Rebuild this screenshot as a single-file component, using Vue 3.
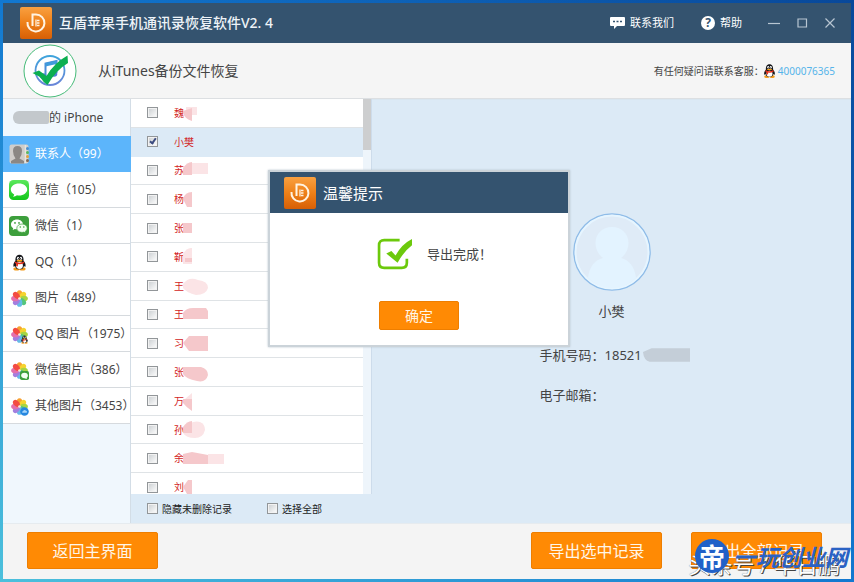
<script setup>
import { ref } from 'vue'

const categories = [
  { icon: 'contacts', label: '联系人（99）', active: true },
  { icon: 'sms', label: '短信（105）' },
  { icon: 'wechat', label: '微信（1）' },
  { icon: 'qq', label: 'QQ（1）' },
  { icon: 'flower', label: '图片（489）' },
  { icon: 'flower', badge: 'qq', label: 'QQ 图片（1975）' },
  { icon: 'flower', badge: 'wechat', label: '微信图片（386）' },
  { icon: 'flower', badge: 'cloud', label: '其他图片（3453）' },
]

const contacts = ref([
  { name: '魏', checked: false, dark: 'M0 12 L9 9 V22 Q2 20 0 14Z', light: 'M3 8 H14 V16 H3Z' },
  { name: '小樊', checked: true },
  { name: '苏', checked: false, dark: 'M0 12 Q4 6 9 6 V19 H0Z', light: 'M9 7 H25 V18 H9Z' },
  { name: '杨', checked: false, dark: 'M0 14 Q2 7 9 7 V22 H4Z', light: '' },
  { name: '张', checked: false, dark: 'M0 9 H9 V19 H0Z', light: '' },
  { name: '靳', checked: false, dark: 'M2 15 H9 V19 H2Z', light: 'M0 11 Q4 4 9 5 V21 H0Z' },
  { name: '王', checked: false, dark: '', light: 'M0 12 Q6 4 15 8 Q25 9 25 16 Q23 23 13 23 Q4 21 0 16Z' },
  { name: '王', checked: false, dark: 'M0 13 Q3 8 10 8 H23 L25 11 V19 H0Z', light: '' },
  { name: '习', checked: false, dark: 'M0 14 L6 7 H25 V22 H6Z', light: '' },
  { name: '张', checked: false, dark: 'M0 9 H18 Q25 11 25 17 Q23 25 14 23 Q3 21 0 16Z', light: '' },
  { name: '万', checked: false, dark: 'M0 12 L9 12 V24 Q3 20 0 16Z', light: 'M2 12 L9 6 V12Z' },
  { name: '孙', checked: false, dark: 'M0 11 Q4 5 9 5 V17 H0Z', light: 'M0 16 V12 Q9 4 17 6 Q22 8 22 14 Q20 22 12 22 Q3 22 0 17Z' },
  { name: '余', checked: false, dark: 'M0 10 L9 8 L25 11 V20 H0Z', light: 'M25 10 H41 V20 H25Z' },
  { name: '刘', checked: false, dark: 'M0 14 L5 7 H9 V21 H4Z', light: '' },
])

const hideKept = ref(false)
const selectAll = ref(false)
const dialogOpen = ref(true)
</script>

<template>
  <div class="desktop">
    <svg class="defs" aria-hidden="true">
      <defs>
        <linearGradient id="gOrange" x1="0" y1="0" x2="0" y2="1">
          <stop offset="0" stop-color="#f9a040" /><stop offset="0.5" stop-color="#ee8018" /><stop offset="1" stop-color="#d75f06" />
        </linearGradient>
        <linearGradient id="gSms" x1="0" y1="0" x2="0" y2="1">
          <stop offset="0" stop-color="#5be85c" /><stop offset="1" stop-color="#13c71a" />
        </linearGradient>
        <linearGradient id="gNote" x1="0" y1="0" x2="0" y2="1">
          <stop offset="0" stop-color="#3fa4dc" /><stop offset="1" stop-color="#6a86d8" />
        </linearGradient>
      </defs>
      <symbol id="logo" viewBox="0 0 32 32">
        <rect width="32" height="32" rx="2" fill="url(#gOrange)" />
        <path d="M7.500 15 A8.500 8.500 0 1 0 16 7.500 H12.500 V19" fill="none" stroke="#fff3e2" stroke-width="2" />
        <path d="M16 12.500 V19.500 M17 13.500 H19.500 M17 16 H19.500 M17 18.500 H19.500" fill="none" stroke="#fff3e2" stroke-width="1.300" />
      </symbol>
      <symbol id="qq" viewBox="0 0 20 20">
        <ellipse cx="6.500" cy="17.500" rx="3.600" ry="1.800" fill="#f39a18" />
        <ellipse cx="13.500" cy="17.500" rx="3.600" ry="1.800" fill="#f39a18" />
        <path d="M10 1 C6.500 1 5 4 5.200 8 C3.500 10 2.300 12.500 3 15 C3.500 15.300 4.200 14.500 4.700 14 C5.500 17 7 18 10 18 C13 18 14.500 17 15.300 14 C15.800 14.500 16.500 15.300 17 15 C17.700 12.500 16.500 10 14.800 8 C15 4 13.500 1 10 1Z" fill="#17181c" />
        <ellipse cx="10" cy="13.500" rx="4" ry="4" fill="#fff" />
        <ellipse cx="8.300" cy="5" rx="1.300" ry="1.800" fill="#fff" />
        <ellipse cx="11.700" cy="5" rx="1.300" ry="1.800" fill="#fff" />
        <circle cx="8.700" cy="5.200" r="0.600" /><circle cx="11.300" cy="5.200" r="0.600" />
        <ellipse cx="10" cy="8" rx="3.500" ry="1.100" fill="#f7a51a" />
        <path d="M4.800 8.700 Q10 12 15.200 8.700 L15.600 10.600 Q10 13.800 4.400 10.600Z" fill="#e8301c" />
        <path d="M6 11 L8.300 11.800 L8 14.800 L6 14Z" fill="#e8301c" />
      </symbol>
      <symbol id="contacts" viewBox="0 0 20 20">
        <rect width="19" height="19" x="0.500" y="0.500" rx="2" fill="#d0cdca" />
        <path d="M2 19.500 V17 L6.500 14.500 Q4 11 4 7 Q4 2 8.500 2 Q13 2 13 7 Q13 11 10.500 14.500 L15 17 V19.500Z" fill="#8b8784" />
        <path d="M16.500 1 V19" stroke="#e9e5dc" stroke-width="1.500" />
        <circle cx="18.500" cy="4.500" r="1.500" fill="#4a8fd0" /><circle cx="18.500" cy="8.500" r="1.500" fill="#58b860" />
        <circle cx="18.500" cy="12.500" r="1.500" fill="#e3a33c" /><circle cx="18.500" cy="16.500" r="1.500" fill="#806a58" />
      </symbol>
      <symbol id="sms" viewBox="0 0 20 20">
        <rect width="20" height="20" rx="4.500" fill="url(#gSms)" />
        <path d="M10 3.500 C5.300 3.500 1.800 6.200 1.800 9.500 C1.800 11.800 3.300 13.400 5.200 14.400 Q5 15.700 3.800 16.800 Q6.500 16.500 8 15.200 Q9 15.500 10 15.500 C14.700 15.500 18.200 12.800 18.200 9.500 C18.200 6.200 14.700 3.500 10 3.500Z" fill="#fff" />
      </symbol>
      <symbol id="wechat" viewBox="0 0 20 20">
        <rect width="20" height="20" rx="4" fill="#3d9f3c" />
        <path d="M8 3.500 C4.500 3.500 2 5.700 2 8.400 C2 10 2.900 11.300 4.200 12.200 L3.700 14 L5.900 12.900 Q7 13.200 8 13.200 C11.400 13.200 14 11 14 8.400 C14 5.700 11.400 3.500 8 3.500Z" fill="#fff" />
        <path d="M13 8 C10 8 7.800 9.900 7.800 12.200 C7.800 14.600 10 16.400 13 16.400 Q14 16.400 14.800 16.100 L16.700 17.100 L16.200 15.500 C17.400 14.700 18.200 13.500 18.200 12.200 C18.200 9.900 16 8 13 8Z" fill="#f4fff2" stroke="#3d9f3c" stroke-width="0.700" />
        <g fill="#3d9f3c"><circle cx="6" cy="6.900" r="0.900" /><circle cx="10" cy="6.900" r="0.900" /><circle cx="11.300" cy="11" r="0.800" /><circle cx="14.800" cy="11" r="0.800" /></g>
      </symbol>
      <symbol id="flower" viewBox="0 0 20 20">
        <g opacity="0.900">
          <ellipse cx="10" cy="4.800" rx="3.300" ry="4.600" fill="#f8961c" />
          <ellipse cx="10" cy="4.800" rx="3.300" ry="4.600" fill="#f6cf18" transform="rotate(45 10 10)" />
          <ellipse cx="10" cy="4.800" rx="3.300" ry="4.600" fill="#9fd02f" transform="rotate(90 10 10)" />
          <ellipse cx="10" cy="4.800" rx="3.300" ry="4.600" fill="#42c070" transform="rotate(135 10 10)" />
          <ellipse cx="10" cy="4.800" rx="3.300" ry="4.600" fill="#56b4e6" transform="rotate(180 10 10)" />
          <ellipse cx="10" cy="4.800" rx="3.300" ry="4.600" fill="#9a72dc" transform="rotate(225 10 10)" />
          <ellipse cx="10" cy="4.800" rx="3.300" ry="4.600" fill="#e260a4" transform="rotate(270 10 10)" />
          <ellipse cx="10" cy="4.800" rx="3.300" ry="4.600" fill="#f2382e" transform="rotate(315 10 10)" />
          <circle cx="10" cy="10" r="1.600" fill="#fbe6d0" />
        </g>
      </symbol>
      <symbol id="bubble" viewBox="0 0 20 20">
        <rect width="20" height="20" rx="4" fill="#3d9f3c" />
        <path d="M10 4 C5 4 2.500 7 2.500 10 C2.500 13 5 16 10 16 L15 17.500 L15 15 C17 13.500 17.500 12 17.500 10 C17.500 7 15 4 10 4Z" fill="#f4fff2" />
      </symbol>
      <symbol id="cloud" viewBox="0 0 20 20">
        <circle cx="10" cy="10" r="9.500" fill="#2688e0" />
        <path d="M5 13 Q3.500 10 7 9 Q9 5 13 8 Q17 9 15 13Z" fill="#a5d4fa" />
      </symbol>
    </svg>

    <div class="window">
      <header class="titlebar">
        <svg class="logo"><use href="#logo" /></svg>
        <h1>互盾苹果手机通讯录恢复软件V2. 4</h1>
        <a class="tool contact" href="#contact">
          <svg width="15" height="14" viewBox="0 0 15 14">
            <path d="M1 1 H14 Q15 1 15 2 V9 Q15 10 14 10 H7 L4 13 V10 H1 Q0 10 0 9 V2 Q0 1 1 1Z" fill="#fff" />
            <path d="M3 5.500 H5 M6.500 5.500 H8.500 M10 5.500 H12" stroke="#34536f" stroke-width="1.600" />
          </svg>
          联系我们
        </a>
        <a class="tool help" href="#help"><span class="mark">?</span>帮助</a>
        <div class="controls">
          <button type="button" aria-label="最小化"><svg viewBox="0 0 12 12"><path d="M0 6.500 H12" /></svg></button>
          <button type="button" aria-label="最大化"><svg viewBox="0 0 12 12"><path d="M2 2 H10.500 V10 H2Z" /></svg></button>
          <button type="button" aria-label="关闭"><svg viewBox="0 0 12 12"><path d="M1.500 1.500 L10.500 10.500 M10.500 1.500 L1.500 10.500" /></svg></button>
        </div>
      </header>

      <section class="banner">
        <svg class="mode" viewBox="0 0 54 54">
          <circle cx="27" cy="27" r="26" fill="#fff" stroke="#45bb78" stroke-width="1" />
          <circle cx="27" cy="26.500" r="14.500" fill="none" stroke="url(#gNote)" stroke-width="1.800" />
          <path d="M22.500 32 V19.500 L33.500 17 V29" fill="none" stroke="#4a8dd8" stroke-width="2" />
          <path d="M22.500 19 L33.500 16.500 V20 L22.500 22.500Z" fill="#3f9bdc" />
          <ellipse cx="20" cy="32" rx="3.500" ry="2.800" fill="#4f7fd4" /><ellipse cx="31" cy="30" rx="3.300" ry="2.700" fill="#4f7fd4" />
          <path d="M9.500 29 L16 26.500 L23.500 32 Q31 19 44.500 11.500 L45 19 Q33 26 24.500 41 Q20 38 17 33Z" fill="#0caf50" />
        </svg>
        <h2>从iTunes备份文件恢复</h2>
        <p class="support">
          有任何疑问请联系客服：
          <svg><use href="#qq" /></svg><a href="tel:4000076365">4000076365</a>
        </p>
      </section>

      <main class="body">
        <nav class="sidebar">
          <div class="device"><span class="masked"></span>的 iPhone</div>
          <a v-for="c in categories" :key="c.label" href="#list" class="category" :class="{ active: c.active }">
            <span class="pic">
              <svg class="main-icon" :class="{ small: c.icon === 'flower' || c.icon === 'qq' }"><use :href="'#' + c.icon" /></svg>
              <svg v-if="c.badge" class="badge"><use :href="c.badge === 'wechat' ? '#bubble' : '#' + c.badge" /></svg>
            </span>
            {{ c.label }}
          </a>
        </nav>

        <section class="records">
          <div class="scroll">
            <ul>
              <li v-for="(p, i) in contacts" :key="i" :class="{ selected: p.checked }">
                <label>
                  <input v-model="p.checked" type="checkbox" />
                  <span>{{ p.name }}</span>
                </label>
                <svg v-if="p.dark || p.light" class="smudge" viewBox="0 0 44 28">
                  <path :d="p.light" fill="#fbe2e4" /><path :d="p.dark" fill="#f5c3c6" />
                </svg>
              </li>
            </ul>
            <div class="track"><div class="thumb"></div></div>
          </div>
          <div class="filters">
            <label><input v-model="hideKept" type="checkbox" />隐藏未删除记录</label>
            <label><input v-model="selectAll" type="checkbox" />选择全部</label>
          </div>
        </section>

        <section class="detail">
          <svg class="avatar" viewBox="0 0 80 80">
            <circle cx="40" cy="40" r="38" fill="#dfebf7" stroke="#8fbce8" stroke-width="1.600" />
            <circle cx="40" cy="40" r="36.500" fill="none" stroke="#e6f5ff" stroke-width="2" />
            <path d="M40 15 C30 15 23.500 22 23.500 31 C23.500 38 27 43 31 46 C23 48 17.500 54 16 66 Q27 76 40 76 Q53 76 64 66 C62.500 54 57 48 49 46 C53 43 56.500 38 56.500 31 C56.500 22 50 15 40 15Z" fill="#e3f3ff" />
          </svg>
          <h3>小樊</h3>
          <dl>
            <div><dt>手机号码：</dt><dd>18521<svg class="phone-mask" viewBox="0 0 50 14"><path d="M0 1 L3 0 M1 4 L10 0 H50 V14 H8 Q2 13 1 4Z" fill="#c4ced8" /></svg></dd></div>
            <div><dt>电子邮箱：</dt><dd></dd></div>
          </dl>
        </section>
      </main>

      <footer class="actions">
        <button type="button" class="primary">返回主界面</button>
        <button type="button" class="primary push">导出选中记录</button>
        <button type="button" class="primary">导出全部记录</button>
      </footer>
    </div>

    <div v-if="dialogOpen" class="dialog" role="dialog" aria-labelledby="dialog-title">
      <div class="dialog-head">
        <svg class="logo"><use href="#logo" /></svg>
        <h2 id="dialog-title">温馨提示</h2>
      </div>
      <div class="dialog-body">
        <p>
          <svg viewBox="0 0 34 32">
            <path d="M22 3 H7 Q2 3 2 8 V25 Q2 30 7 30 H24 Q29 30 29 25 V21" fill="none" stroke="#6cc90c" stroke-width="2.600" />
            <path d="M9 16 L14 13.500 L18 18 Q24 7 34 2 L34 8 Q26 14 20 25Z" fill="#6cc90c" />
          </svg>
          导出完成！
        </p>
        <button type="button" class="primary ok" @click="dialogOpen = false">确定</button>
      </div>
    </div>

    <div class="watermark author">头条号 / 华日鹏</div>
    <div class="watermark site">
      <span class="seal">帝</span>
      <span>一玩创业网</span>
    </div>
  </div>
</template>

<style>
body {
  margin: 0;
  overflow: hidden;
}
</style>

<style scoped>
.desktop {
  position: relative;
  display: flex;
  box-sizing: border-box;
  height: 100vh;
  padding: 3px;
  overflow: hidden;
  background: linear-gradient(to top right, #4cc0dc, #1278d0 50%, #08489a);
  color: #444;
  font: 12px/16px "Noto Sans", "Noto Sans CJK SC", sans-serif;
}
.defs { position: absolute; width: 0; height: 0; }
h1, h2, h3, p, ul, dl, dd { margin: 0; padding: 0; font-weight: 400; }
a { color: inherit; text-decoration: none; }
button { padding: 0; border: 0; font-family: inherit; cursor: pointer; }
svg { flex: none; }

.window { display: flex; flex: 1; flex-direction: column; min-width: 0; background: #f4f4f4; }

.titlebar { display: flex; align-items: center; flex: none; height: 40px; padding: 0 15px 0 17px; background: #34536f; color: #fff; }
.logo { width: 32px; height: 32px; }
.titlebar h1 { margin-left: 7px; color: #eef3f8; font-size: 14px; font-weight: 500; }
.tool { display: flex; align-items: center; gap: 5px; font-size: 11px; }
.contact { margin-left: auto; }
.help { margin-left: 27px; }
.mark { width: 14px; height: 14px; border-radius: 50%; background: #fff; color: #34536f; font-size: 12px; font-weight: 700; line-height: 14px; text-align: center; }
.controls { display: flex; gap: 16px; margin-left: 26px; }
.controls button { width: 12px; height: 12px; background: none; }
.controls svg { display: block; width: 12px; height: 12px; fill: none; stroke: #b8c6d2; stroke-width: 1.2; }

.banner { display: flex; align-items: center; flex: none; height: 55px; padding: 0 16px 0 20px; border-bottom: 1px solid #dcdfe2; background: #f5f5f5; }
.mode { width: 54px; height: 54px; }
.banner h2 { margin-left: 21px; font-size: 14px; }
.support { display: flex; align-items: center; margin-left: auto; font-size: 10px; }
.support svg { width: 15px; height: 16px; margin-left: -2px; }
.support a { margin-left: 1px; color: #55b4ea; }

.body { display: flex; flex: 1; min-height: 0; }
.sidebar { flex: none; width: 127px; border-right: 1px solid #d3dde6; background: #f0f7fd; }
.device { display: flex; align-items: center; height: 37px; padding-left: 10px; }
.masked { width: 36px; height: 13px; border-radius: 6px 2px 2px 6px; background: #c3c8cc; }
.category { display: flex; align-items: center; gap: 6px; box-sizing: border-box; height: 36px; padding: 1px 0 0 6px; border-bottom: 1px solid #d6dade; background: #fff; white-space: nowrap; }
.category.active { margin-right: -1px; border-color: #5cb5fb; background: #5cb5fb; color: #fff; }
.pic { position: relative; display: flex; align-items: center; justify-content: center; flex: none; width: 20px; height: 20px; }
.main-icon { width: 20px; height: 20px; }
.main-icon.small { width: 17px; height: 17px; }
.badge { position: absolute; right: 0; bottom: 0; width: 9px; height: 9px; }

.records { display: flex; flex: none; flex-direction: column; width: 241px; background: #dceaf6; }
.scroll { display: flex; flex: 1; min-height: 0; overflow: hidden; }
.records ul { display: grid; flex: 1; grid-template-rows: repeat(14, minmax(0, 1fr)); height: 403px; list-style: none; background: #fff; }
.records li { display: flex; align-items: center; border-bottom: 1px solid #dfe3e6; }
.records li.selected { background: #dceaf6; border-color: #dceaf6; }
.records label { display: flex; align-items: center; }
.records li label { gap: 16px; padding-left: 16px; color: #d22424; font-size: 10px; }
.records input { appearance: none; position: relative; flex: none; width: 11px; height: 11px; margin: 0; border: 1px solid #929699; background: linear-gradient(135deg, #c9cdd0, #fff); box-shadow: inset 0 0 0 1px #f2f2f2; }
.records input:checked::after { content: ""; position: absolute; top: 0; left: 3px; width: 2px; height: 5px; border: solid #3c4c80; border-width: 0 2px 2px 0; transform: rotate(35deg); }
.smudge { width: 44px; height: 28px; margin-left: -1px; opacity: 0.9; }
.track { width: 8px; border-right: 1px solid #cddceb; background: #eef5fb; }
.thumb { height: 51px; background: #cdcecf; }
.filters { display: flex; align-items: center; gap: 35px; flex: none; height: 29px; padding-left: 16px; color: #222; font-size: 10px; }
.filters label { gap: 4px; }

.detail { display: flex; flex: 1; flex-direction: column; align-items: center; padding-top: 112px; border-top: 1px solid #d9e6f0; background: #dceaf6; font-size: 13px; line-height: 20px; }
.avatar { width: 80px; height: 80px; }
.detail h3 { margin-top: 9px; font-size: 13px; }
.detail dl { display: grid; gap: 20px; width: 144px; margin-top: 24px; }
.detail dl div { display: flex; white-space: nowrap; }
.detail dl dd { display: flex; align-items: center; }
.phone-mask { width: 48px; height: 14px; }

.actions { display: flex; gap: 29px; flex: none; box-sizing: border-box; height: 56px; padding: 8px 29px 10px 24px; border-top: 1px solid #e6ebef; background: #f4f4f4; }
.primary { width: 131px; border: 1px solid #ee7e00; border-radius: 2px; background: #ff8a04; color: #fff6e8; font-size: 16px; line-height: 20px; }
.push { margin-left: auto; }

.dialog { position: absolute; top: 170px; left: 268px; width: 298px; border: 2px solid #cbd3d9; background: #fff; box-shadow: 0 0 2px #b8c4ce; }
.dialog-head { display: flex; align-items: center; gap: 7px; height: 41px; padding-left: 14px; background: #34536f; color: #fff; }
.dialog-head h2 { font-size: 15px; }
.dialog-body { display: flex; flex-direction: column; align-items: center; padding: 24px 0 15px; }
.dialog-body p { display: flex; align-items: center; gap: 15px; margin-left: 31px; font-size: 13px; }
.dialog-body p svg { width: 35px; height: 33px; }
.ok { width: 80px; height: 29px; margin-top: 31px; font-size: 14px; }

.watermark { position: absolute; white-space: nowrap; }
.author { right: 14px; bottom: 5px; color: #fff; font-size: 22px; line-height: 26px; text-shadow: 1px 1px 0 #444, 0 0 1px #555; }
.site { display: flex; align-items: center; gap: 4px; right: 6px; bottom: 9px; color: #2a62c4; font: italic 700 23px/32px "Noto Sans CJK SC", sans-serif; }
.seal { width: 34px; height: 34px; border-radius: 50%; background: #2161c8; color: #fff; font-style: normal; font-size: 26px; line-height: 34px; text-align: center; }
</style>
